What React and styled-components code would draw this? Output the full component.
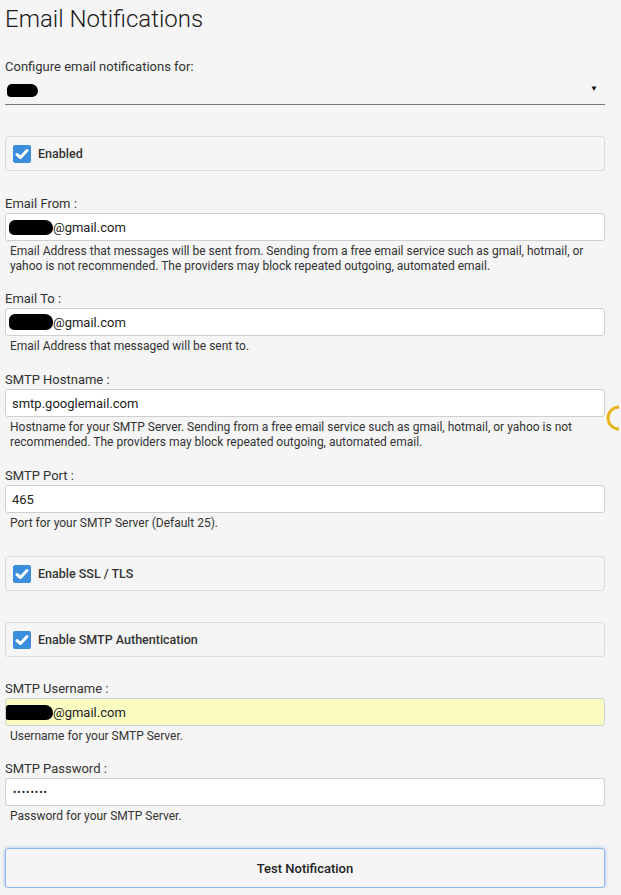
import React from 'react'
import styled, { createGlobalStyle } from 'styled-components'

const Global = createGlobalStyle`
    html, body {
        margin: 0;
        background: #f5f5f5;
        overflow-x: hidden;
    }
    body {
        font-family: Roboto, 'Liberation Sans', sans-serif;
        color: #222;
    }
`

const Page = styled.div`
    position: relative;
    width: 600px;
    padding: 6px 0 0 5px;
`
const Title = styled.h1`
    margin: 0;
    font-size: 24px;
    font-weight: 300;
    line-height: 26px;
    color: #1a1a1a;
`
const Intro = styled.div`
    margin-top: 26px;
    font-size: 13px;
    line-height: 18px;
    color: #333;
`
const Select = styled.div`
    height: 28px;
    display: flex;
    align-items: center;
    justify-content: space-between;
    border-bottom: 1px solid #777;
    padding: 0 7px 0 2px;
`
const Arrow = styled.span`
    font-size: 8px;
    color: #111;
    margin-top: -4px;
`
const Blob = styled.span`
    display: inline-block;
    width: ${p => p.w}px;
    height: ${p => p.h || 15}px;
    background: #000;
    border-radius: ${p => p.r || '6px 8px 7px 5px'};
    margin-left: ${p => p.ml || 0}px;
    vertical-align: middle;
`
const Panel = styled.div`
    margin-top: ${p => p.mt}px;
    height: 33px;
    border: 1px solid #dcdcdc;
    border-radius: 3px;
    display: flex;
    align-items: center;
    gap: 7px;
    padding: 0 7px;
    font-size: 12.5px;
    font-weight: 500;
    color: #333;
`
const Box = styled.span`
    width: 18px;
    height: 18px;
    border-radius: 2px;
    background: #3b8edb;
    display: flex;
    align-items: center;
    justify-content: center;
`
const Group = styled.div`
    margin-top: ${p => p.mt}px;
`
const Label = styled.div`
    font-size: 13px;
    line-height: 16px;
    color: #333;
    margin-bottom: 1px;
`
const Input = styled.div`
    height: 26px;
    border: 1px solid #cfcfcf;
    border-radius: 3px;
    background: ${p => p.bg || '#fff'};
    display: flex;
    align-items: center;
    padding: 0 6px;
    font-size: 13px;
    color: #222;
`
const Dots = styled.span`
    font-size: 10px;
    letter-spacing: 1px;
    margin-left: 1px;
`
const Help = styled.div`
    margin-top: 3px;
    padding-left: 5px;
    font-size: 12px;
    line-height: 15px;
    color: #333;
`
const Button = styled.div`
    margin-top: 24px;
    height: 38px;
    border: 1px solid #8ab6ee;
    border-radius: 3px;
    box-shadow: 0 0 4px rgba(80, 140, 230, 0.55);
    display: flex;
    align-items: center;
    justify-content: center;
    font-size: 13px;
    font-weight: 500;
    color: #222;
`
const Spinner = styled.svg`
    position: absolute;
    left: 603px;
    top: 404px;
`

const Check = () => (
    <Box>
        <svg width="14" height="12" viewBox="0 0 14 12">
            <path d="M2 6.5 L5.5 9.5 L12 2.5" fill="none" stroke="#fff" strokeWidth="3" strokeLinecap="round" strokeLinejoin="round" />
        </svg>
    </Box>
)

const Field = ({ label, mt, bg, children, help }) => (
    <Group mt={mt}>
        <Label>{label}</Label>
        <Input bg={bg}>{children}</Input>
        <Help>{help}</Help>
    </Group>
)

const App = () => (
    <Page>
        <Global />
        <Title>Email Notifications</Title>
        <Intro>Configure email notifications for:</Intro>
        <Select>
            <Blob w={31} h={13} r="5px 7px 6px 4px" />
            <Arrow>▼</Arrow>
        </Select>
        <Panel mt={31}><Check />Enabled</Panel>

        <Field label="Email From :" mt={25}
            help="Email Address that messages will be sent from. Sending from a free email service such as gmail, hotmail, or yahoo is not recommended. The providers may block repeated outgoing, automated email.">
            <Blob w={44} ml={-3} />@gmail.com
        </Field>
        <Field label="Email To :" mt={17} help="Email Address that messaged will be sent to.">
            <Blob w={44} h={16} ml={-3} />@gmail.com
        </Field>
        <Field label="SMTP Hostname :" mt={18}
            help="Hostname for your SMTP Server. Sending from a free email service such as gmail, hotmail, or yahoo is not recommended. The providers may block repeated outgoing, automated email.">
            smtp.googlemail.com
        </Field>
        <Field label="SMTP Port :" mt={18} help="Port for your SMTP Server (Default 25).">
            465
        </Field>

        <Panel mt={25}><Check />Enable SSL / TLS</Panel>
        <Panel mt={31}><Check />Enable SMTP Authentication</Panel>

        <Field label="SMTP Username :" mt={24} bg="#fafcc2" help="Username for your SMTP Server.">
            <Blob w={47} ml={-6} r="3px 9px 8px 2px" />@gmail.com
        </Field>
        <Field label="SMTP Password :" mt={17} help="Password for your SMTP Server.">
            <Dots>••••••••</Dots>
        </Field>

        <Button>Test Notification</Button>

        <Spinner width="20" height="28" viewBox="0 0 20 28">
            <path d="M16 3 A11 11 0 1 0 16 25" fill="none" stroke="#e6b418" strokeWidth="3" />
        </Spinner>
    </Page>
)

export default App
